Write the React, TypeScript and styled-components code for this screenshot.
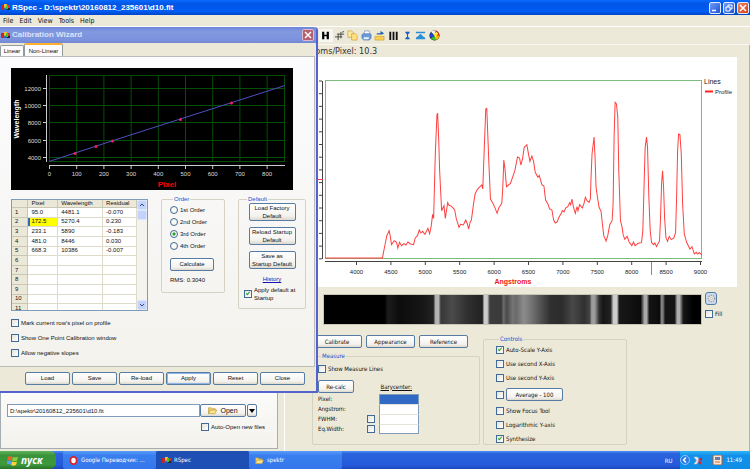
import React from "react";
import styled, { createGlobalStyle, css } from "styled-components";

const sans = `"Liberation Sans", Arial, sans-serif`;
const tahoma = `"DejaVu Sans Condensed", "DejaVu Sans", Tahoma, sans-serif`;

const GlobalStyle = createGlobalStyle`
  *, *::before, *::after { box-sizing: border-box; }
  body { margin: 0; background: #ece9d8; color: #111; font: 6px/8px ${tahoma}; }
  button, input, legend, label, table { font: inherit; color: inherit; }
  svg { display: block; }
`;

/* ---------- shared controls ---------- */

const Button = styled.button<{ $active?: boolean; $width?: number; $tall?: boolean }>`
  height: ${(p) => (p.$tall ? 18 : 13)}px;
  width: ${(p) => (p.$width ? `${p.$width}px` : "auto")};
  padding: 0;
  border: 1px solid #567ba4;
  border-radius: 2px;
  background: linear-gradient(#ffffff, #f3f2ee 75%, #dcd8cc);
  box-shadow: ${(p) => (p.$active ? "inset 0 0 0 1px #8fb4ec" : "none")};
  text-align: center;
  line-height: ${(p) => (p.$tall ? 8 : 11)}px;
`;

const Tick = styled.input`
  appearance: none;
  flex: none;
  position: relative;
  width: 8px;
  height: 8px;
  margin: 0;
  border: 1px solid #3f6b96;
  background: linear-gradient(135deg, #e4e3dc, #ffffff);
  &:checked::after {
    content: "";
    position: absolute;
    left: 2px;
    top: 0;
    width: 2px;
    height: 4px;
    border: solid #21a121;
    border-width: 0 1px 1px 0;
    transform: rotate(40deg);
  }
`;

const Radio = styled.input`
  appearance: none;
  flex: none;
  width: 8px;
  height: 8px;
  margin: 0;
  border: 1px solid #3f6b96;
  border-radius: 50%;
  background: #f8f8f5;
  &:checked {
    background: radial-gradient(circle, #21a121 0 1px, #f8f8f5 2px);
  }
`;

const Label = styled.label`
  display: flex;
  align-items: center;
  gap: 2px;
  white-space: nowrap;
`;

const Group = styled.fieldset`
  min-width: 0;
  margin: 0;
  padding: 0;
  border: 1px solid #d5d2c2;
  border-radius: 2px;
`;

const Legend = styled.legend`
  margin-left: 3px;
  padding: 0 1px;
  line-height: 8px;
  color: #1a4fd6;
`;

function Check({ text, on }: { text: string; on?: boolean }) {
  return (
    <Label>
      <Tick type="checkbox" defaultChecked={on} />
      {text}
    </Label>
  );
}

/* ---------- window chrome ---------- */

const Page = styled.div`
  display: flex;
  flex-direction: column;
  min-height: 100vh;
`;

const TitleBar = styled.header`
  display: flex;
  align-items: center;
  gap: 2px;
  height: 15px;
  padding: 0 1px;
  background: linear-gradient(#0a6bff, #0055e5 25%, #005cf5 75%, #0045c4);
`;

const Title = styled.h1`
  flex: 1;
  margin: 0;
  color: #fff;
  font: bold 8px/14px ${sans};
  white-space: nowrap;
`;

const CaptionButton = styled.button<{ $close?: boolean }>`
  width: 12px;
  height: 12px;
  padding: 1px;
  border: 1px solid #dfe9ff;
  border-radius: 2px;
  background: ${(p) =>
    p.$close
      ? "linear-gradient(135deg, #f08a68, #d83a12)"
      : "linear-gradient(135deg, #6d9cf8, #1f52d6)"};
`;

const MenuBar = styled.nav`
  display: flex;
  gap: 6px;
  height: 11px;
  padding: 0 3px;
  font-size: 7px;
  line-height: 10px;
`;

const MenuItem = styled.button`
  padding: 0;
  border: 0;
  background: none;
`;

const Workspace = styled.main`
  position: relative;
  flex: 1;
  display: flex;
  flex-direction: column;
`;

const ToolBar = styled.div`
  display: grid;
  grid-template-columns: repeat(9, 1fr);
  align-items: center;
  width: 122px;
  height: 17px;
  margin-left: 319px;
`;

const ToolStrip = styled.div`
  border-top: 1px solid #fff;
  border-bottom: 1px solid #f8f7f0;
`;

const ToolButton = styled.button<{ $on?: boolean }>`
  display: grid;
  place-items: center;
  height: 13px;
  padding: 0;
  border: 0;
  background: ${(p) => (p.$on ? "#f7f6f0" : "none")};
`;

function AppIcon() {
  return (
    <svg width="9" height="7" viewBox="0 0 9 7">
      <rect y="1" width="9" height="5" fill="#223" />
      <rect x="0" y="1" width="3" height="5" fill="#c22" />
      <rect x="3" y="0" width="3" height="5" fill="#fb3" />
      <rect x="5" y="1" width="2" height="4" fill="#3c3" />
      <rect x="7" y="1" width="2" height="3" fill="#d33" />
      <path d="M2 6l2-3 2 3z" fill="#26c" />
    </svg>
  );
}

function Folder({ size = 9 }: { size?: number }) {
  return (
    <svg width={size} height={size} viewBox="0 0 10 10">
      <path d="M.5 8.500V2h3l1 1H8v1.500" fill="#f4d264" stroke="#a8842a" strokeWidth=".6" />
      <path d="M.5 8.500L2.500 4.500H9.700L7.800 8.500z" fill="#ffe58a" stroke="#a8842a" strokeWidth=".6" />
    </svg>
  );
}

const toolIcons: { name: string; art: React.ReactNode }[] = [
  { name: "Profile", art: <path d="M3 2v8M4 2v8M8 2v8M9 2v8M4 6h4" stroke="#000" strokeWidth="1.400" fill="none" /> },
  { name: "Crop", art: <path d="M4.500 4v7M1 7.500h8M7.500 2v7M3.500 4.500H11M9 2.500l2-1" stroke="#333" strokeWidth=".9" fill="none" /> },
  {
    name: "Copy",
    art: (
      <>
        <path d="M1 1h4l2 2v5H1z" fill="#ffe9a0" stroke="#c79a3a" strokeWidth=".7" />
        <path d="M5 4h4l2 2v5H5z" fill="#ffe080" stroke="#c79a3a" strokeWidth=".7" />
      </>
    ),
  },
  {
    name: "Print",
    art: (
      <>
        <path d="M4 1h5l1 4H3z" fill="#fff" stroke="#5c86c0" strokeWidth=".7" />
        <path d="M1 5l2-1h7l1 1v4l-2 2H3L1 9z" fill="#6a9ad8" stroke="#3b68a8" strokeWidth=".6" />
        <path d="M3 8h6l-1 2H3z" fill="#eef4fc" />
      </>
    ),
  },
  {
    name: "Open",
    art: (
      <>
        <path d="M1 7h10v4H1z" fill="#f7cf55" stroke="#c7982a" strokeWidth=".6" />
        <path d="M2 5h9v1.500H2z" fill="#ffe48c" />
        <path d="M3 3.500h4V1l4 2.500L9 5H3z" fill="#2463b8" />
      </>
    ),
  },
  { name: "Lines", art: <path d="M2.500 2v9M6 2v9M9.500 2v9" stroke="#111" strokeWidth="2" /> },
  { name: "Height", art: <path d="M3.500 2.500h5M3.500 9.500h5M6 2.500v7M4.500 4L6 2.500 7.500 4M4.500 8L6 9.500 7.500 8" stroke="#1c62b8" strokeWidth="1.200" fill="none" /> },
  { name: "Peak", art: <path d="M1 2h10v1.500H1zM6 4l4 4h1v2H1V8h1z" fill="#2b8fd8" /> },
  {
    name: "Colors",
    art: (
      <>
        <circle cx="6" cy="6" r="5.500" fill="#111" />
        <path d="M6 6L2 2A5.500 5.500 0 0 1 8 1z" fill="#eee" />
        <path d="M6 6L7 1a5 5 0 0 1 4 5z" fill="#f22" />
        <path d="M6 6h5a5 5 0 0 1-4 5z" fill="#fb1" />
        <path d="M6 6l1 5a5 5 0 0 1-5-2z" fill="#3b3" />
        <path d="M6 6L2 9a5 5 0 0 1 0-6z" fill="#24d" />
        <path d="M5 5l3-3 2 2-3 4z" fill="#fe3" />
      </>
    ),
  },
];

/* ---------- main columns ---------- */

const Columns = styled.div`
  flex: 1;
  display: grid;
  grid-template-columns: 278px minmax(0, 1fr);
  column-gap: 6px;
`;

const FilePanel = styled.section`
  display: flex;
  flex-direction: column;
  justify-content: flex-end;
  gap: 6px;
  margin-bottom: 2px;
  padding: 0 20px 17px 6px;
  border: solid #a5acb2;
  border-width: 0 1px 1px 1px;
  background: linear-gradient(#fff 80%, #f3f2ed);
  font-family: ${sans};
`;

const FileRow = styled.div`
  display: flex;
  height: 13px;
`;

const PathInput = styled.input`
  flex: 1;
  min-width: 0;
  padding: 0 2px;
  border: 1px solid #7f9db9;
  background: #fff;
`;

const OpenButton = styled(Button)`
  display: flex;
  align-items: center;
  justify-content: center;
  gap: 3px;
  margin-right: 1px;
  font-size: 7px;
`;

const AutoOpen = styled.div`
  display: flex;
  justify-content: flex-end;
  margin-right: -8px;
`;

const Analysis = styled.section`
  display: flex;
  flex-direction: column;
  padding-right: 12px;
  border-left: 1px solid #fff;
  border-right: 1px solid #b5b2a4;
`;

const Scale = styled.div`
  height: 12px;
  padding-left: 4px;
  font-size: 9px;
  line-height: 13px;
  color: #333;
`;

const ChartBox = styled.div`
  background: #fff;
  > svg {
    width: 100%;
    height: auto;
  }
`;

const StripRow = styled.div`
  display: grid;
  grid-template-columns: minmax(0, 1fr) 32px;
  column-gap: 3px;
  margin-top: 5px;
  padding-left: 38px;
`;

const Strip = styled.div`
  height: 31px;
  margin-top: 2px;
  border: 1px solid #c9c6b6;
  background: linear-gradient(
    90deg,
    #000 0 16%, #1c1c1c 17%, #0c0c0c 20%, #161616 26%, #222 29%,
    #b4b4b4 29.600% 30.400%, #383838 31%, #4a4a4a 34%, #303030 38%, #222 42%,
    #ccc 42.500% 43.300%, #3c3c3c 44%, #3a3a3a 47%, #6a6a6a 47.600%, #4a4a4a 48.500%,
    #747474 50%, #6a6a6a 51%, #8c8c8c 53%, #747474 55%, #585858 57%, #303030 60%,
    #2c2c2c 63%, #484848 66%, #303030 69%, #444 70.500%,
    #9c9c9c 71% 71.800%, #303030 73%, #161616 74%, #222 76%,
    #ccc 76.800% 77.700%, #181818 78.300%, #0c0c0c 84%,
    #aaa 85% 85.600%, #141414 86.300%, #0c0c0c 89%, #808080 89.500% 89.900%,
    #141414 90.500%, #161616 93%, #b0b0b0 93.700% 94.300%, #161616 95.300%, #000 98%
  );
`;

const StripTools = styled.div`
  display: flex;
  flex-direction: column;
  gap: 5px;
`;

const GearButton = styled(Button)`
  display: grid;
  place-items: center;
  border-radius: 3px;
  background: #c9daf0;
`;

const LowerArea = styled.div`
  display: grid;
  grid-template-columns: 168px 144px;
  column-gap: 3px;
  padding-left: 27px;
  margin-top: 10px;
`;

const ButtonRow = styled.div`
  display: flex;
  gap: 4px;
`;

const Measure = styled(Group)`
  margin-top: 4px;
  height: 93px;
  padding: 5px 4px 0 5px;
`;

const MeasureTools = styled.div`
  display: flex;
  justify-content: space-between;
  align-items: center;
  margin: 7px 63px 1px 0;
`;

const MeasureGrid = styled.div`
  display: grid;
  grid-template-columns: 49px 12px 40px;
  grid-auto-rows: 10px;
  align-items: center;
`;

const MeasureValue = styled.output<{ $first?: boolean; $last?: boolean }>`
  height: 10px;
  border: 1px solid #7f9db9;
  border-top-color: ${(p) => (p.$first ? "#7f9db9" : "#e6e3d8")};
  border-bottom: ${(p) => (p.$last ? "1px solid #7f9db9" : "0")};
  background: ${(p) => (p.$first ? "#316ac5" : "#fff")};
`;

const Controls = styled(Group)`
  height: 110px;
  padding: 3px 12px 1px;
`;

const ControlList = styled.div`
  display: flex;
  flex-direction: column;
  justify-content: space-between;
  height: 97px;
`;

const Underlined = styled.span`
  text-decoration: underline;
`;

/* ---------- calibration dialog ---------- */

const Dialog = styled.section`
  position: absolute;
  left: 0;
  top: 1px;
  width: 318px;
  border: solid #5563d0;
  border-width: 0 2px 2px 0;
  border-radius: 0 4px 0 0;
  background: #ece9d8;
  font-family: ${sans};
`;

const DialogTitle = styled(TitleBar)`
  height: 16px;
  border-radius: 0 3px 0 0;
  background: linear-gradient(#6f85d8, #8299e0 30%, #7b92dd 80%, #7388d4);
`;

const DialogName = styled(Title)`
  color: #d9e2f8;
`;

const DialogClose = styled(CaptionButton)`
  border-color: #dcb9cc;
  background: #b4606f;
  margin-right: 1px;
`;

const Tabs = styled.div`
  display: flex;
  align-items: end;
  height: 13px;
`;

const Tab = styled.button<{ $on?: boolean }>`
  height: ${(p) => (p.$on ? 13 : 11)}px;
  width: ${(p) => (p.$on ? 39 : 24)}px;
  padding: 0;
  border: 1px solid #919b9c;
  border-bottom: 0;
  border-radius: 2px 2px 0 0;
  background: #fcfcfe;
  ${(p) => p.$on && css`border-top: 2px solid #ffb02e;`}
`;

const TabPage = styled.div`
  margin-right: 1px;
  padding: 11px 8px 9px 11px;
  border: solid #b9bcb8;
  border-width: 1px 1px 1px 0;
  background: linear-gradient(#fcfcfe, #f3f2ed);
`;

const FitRow = styled.div`
  display: grid;
  grid-template-columns: 137px 64px 68px;
  justify-content: space-between;
  align-items: start;
  margin-top: 5px;
`;

const GridFrame = styled.div`
  display: flex;
  height: 112px;
  margin-top: 4px;
  overflow: hidden;
  border: 1px solid #7f9db9;
  background: #fff;
`;

const DataTable = styled.table`
  flex: 1;
  height: 114px;
  border-collapse: collapse;
  table-layout: fixed;
  line-height: 7px;
  th, td {
    padding: 0 0 0 3px;
    border: solid #dedbc9;
    border-width: 0 1px 1px 0;
    font-weight: normal;
    text-align: left;
  }
  th { background: #ebe8d8; border-color: #c9c6b6; }
`;

const Col = styled.col<{ $w: number }>`
  width: ${(p) => p.$w}px;
`;

const Cell = styled.td<{ $picked?: boolean }>`
  ${(p) => p.$picked && css`
    background: #ffff00;
    box-shadow: inset 2px 0 0 #316ac5;
  `}
`;

const ScrollBar = styled.div`
  display: flex;
  flex-direction: column;
  width: 10px;
  background: #f4f3ee;
`;

const ScrollArrow = styled.button`
  display: grid;
  place-items: center;
  height: 10px;
  padding: 0;
  border: 1px solid #dbe5fb;
  border-radius: 2px;
  background: #c3d3fd;
`;

const Thumb = styled(ScrollArrow)`
  margin-bottom: auto;
`;

const Order = styled(Group)`
  height: 98px;
  padding: 3px 0 0 8px;
`;

const OrderList = styled.div`
  display: grid;
  gap: 4px;
  margin-bottom: 8px;
`;

const Rms = styled.p`
  margin: 5px 0 0;
`;

const Defaults = styled(Group)`
  height: 114px;
  padding: 0 5px;
`;

const DefaultStack = styled.div`
  display: grid;
  justify-items: center;
  gap: 6px;
  button { width: 47px; }
`;

const History = styled.a`
  color: #1414b4;
  line-height: 8px;
`;

const WrapLabel = styled(Label)`
  margin-top: 3px;
`;

const Options = styled.div`
  display: grid;
  gap: 7px;
  margin-top: 8px;
`;

const Footer = styled.footer`
  display: flex;
  justify-content: flex-end;
  gap: 2px;
  padding: 5px 11px 6px;
`;

/* ---------- task bar ---------- */

const TaskBar = styled.footer`
  display: flex;
  height: 18px;
  background: linear-gradient(#4a92f5, #2b63dc 15%, #245adb 80%, #1c48b8);
  color: #fff;
`;

const Start = styled.button`
  display: flex;
  align-items: center;
  gap: 3px;
  width: 56px;
  margin-right: 7px;
  padding: 0 0 0 7px;
  border: 0;
  border-radius: 0 6px 6px 0;
  background: linear-gradient(#5fb55f, #3a933a 25%, #3c9a3c 75%, #2a722a);
  color: #fff;
  font: italic bold 10px/16px "Open Sans", "Noto Sans", sans-serif;
`;

const Task = styled.button<{ $on?: boolean }>`
  display: flex;
  align-items: center;
  gap: 3px;
  width: 93px;
  padding: 0 6px;
  border: 0;
  border-radius: 2px;
  background: ${(p) => (p.$on ? "#1e4fb4" : "linear-gradient(#5a9cfa, #3a7ff0 25%, #3577ea)")};
  color: #fff;
  white-space: nowrap;
`;

const Tray = styled.div`
  display: flex;
  align-items: center;
  gap: 3px;
  margin-left: 8px;
  padding-right: 8px;
  background: linear-gradient(#2fb4f5, #1391ea 25%, #0f8ee8);
`;

const Language = styled.span`
  margin-left: auto;
  line-height: 19px;
`;

const spectrum =
  "48,562 220,562 223,545 228,520 233,495 240,480 243,495 247,522 255,510 262,515 266,532 271,515 277,525 284,519 290,523 296,514 304,520 313,522 318,502 325,495 330,478 335,487 340,482 347,491 356,473 361,489 366,465 370,431 373,443 378,250 383,132 385,128 388,200 391,300 397,420 404,405 408,443 415,396 419,404 427,407 436,418 441,445 449,470 454,461 462,463 469,448 474,460 478,475 482,455 486,448 491,410 497,370 504,356 517,343 520,355 525,220 529,115 532,113 535,190 538,270 543,385 550,397 556,410 563,428 568,412 577,398 580,350 583,268 587,300 591,348 603,338 616,300 624,259 630,262 634,283 639,265 644,230 652,222 656,245 661,272 667,256 672,272 677,305 685,320 689,314 697,342 703,346 708,388 715,400 720,415 727,418 732,448 737,457 743,453 748,440 755,428 758,420 763,424 768,412 775,407 780,396 783,402 787,385 791,408 797,428 802,408 805,420 810,402 818,412 823,398 827,380 832,390 838,395 842,385 844,320 847,250 853,199 856,260 859,350 864,385 868,410 874,422 878,460 882,495 889,511 894,495 900,462 907,450 910,400 913,200 916,95 920,100 924,140 927,300 932,450 937,470 940,492 945,506 952,497 958,514 966,525 971,514 976,525 985,518 995,516 999,480 1003,330 1006,230 1010,199 1013,230 1017,380 1021,480 1025,515 1031,522 1035,517 1040,528 1049,510 1052,440 1055,340 1058,300 1061,350 1064,440 1068,500 1073,512 1078,497 1084,507 1092,502 1097,485 1100,380 1103,240 1106,190 1110,192 1114,250 1118,400 1123,490 1130,515 1140,535 1146,528 1153,550 1159,545 1163,550 1168,546 1176,553";

function SpectrumChart() {
  const wavelengths = Array.from({ length: 11 }, (_, i) => 4000 + i * 500);
  return (
    <svg viewBox="0 0 452 230" fontFamily={sans} fontSize="6" fill="#222">
      <path d="M37.500 24V202" stroke="#444" />
      {Array.from({ length: 15 }, (_, i) => (
        <path key={i} d={`M34 ${24 + i * 12.7}h3`} stroke="#444" />
      ))}
      <path d="M33 122.500h5" stroke="#f33" />
      <rect x="40.500" y="23.500" width="376" height="178" fill="#fff" stroke="#7dbb7d" />
      <svg x="40" y="23" width="377" height="179" viewBox="48 28 1128 537" preserveAspectRatio="none">
        <polyline points={spectrum} fill="none" stroke="#ff4040" strokeWidth="3" />
      </svg>
      <path d="M40 204.500H417" stroke="#444" />
      {wavelengths.map((w, i) => (
        <g key={w}>
          <path d={`M${71.5 + i * 34.4} 205v3`} stroke="#444" />
          <text x={71.5 + i * 34.4} y="217" textAnchor="middle">{w}</text>
        </g>
      ))}
      <path d="M366.500 205v13" stroke="#f55" />
      <text x="228" y="227" textAnchor="middle" fill="#f01818" fontWeight="bold" fontSize="7">Angstroms</text>
      <text x="419" y="27" fontSize="7">Lines</text>
      <path d="M420 34.500h8" stroke="#f22" strokeWidth="2" />
      <text x="430" y="37">Profile</text>
    </svg>
  );
}

function CalibrationChart() {
  const points = [[64, 85.5], [85, 78.5], [101.5, 73], [169.5, 51.5], [220.5, 35]];
  return (
    <svg width="282" height="122" viewBox="0 0 282 122" fontFamily={sans} fontSize="6" fill="#ddd">
      <rect width="282" height="122" fill="#000" />
      <rect x="38.500" y="7.500" width="235" height="86" fill="none" stroke="#064d06" />
      {[20.5, 37.5, 54.5, 72.5, 89.5].map((y, i) => (
        <g key={y}>
          <path d={`M39 ${y}h235`} stroke="#064d06" />
          <path d={`M32 ${y}h3`} stroke="#ccc" />
          <text x="30" y={y + 2} textAnchor="end">{12000 - i * 2000}</text>
        </g>
      ))}
      {Array.from({ length: 9 }, (_, i) => (
        <g key={i}>
          {i > 0 && <path d={`M${38.5 + i * 27.2} 7v87`} stroke="#064d06" />}
          <path d={`M${38.5 + i * 27.2} 97v4`} stroke="#ccc" />
          <text x={38.5 + i * 27.2} y="108" textAnchor="middle">{i * 100}</text>
        </g>
      ))}
      <path d="M35.500 7v87M38 97.500h236" stroke="#ccc" />
      <path d="M38 93.500L110 70l164-52.500" stroke="#4f4fc4" fill="none" />
      {points.map(([x, y]) => (
        <circle key={x} cx={x} cy={y} r="1.500" fill="#f0205a" />
      ))}
      <text x="156" y="119" textAnchor="middle" fill="#f00" fontWeight="bold" fontSize="8">Pixel</text>
      <text transform="translate(8 51) rotate(-90)" textAnchor="middle" fill="#fff" fontWeight="bold" fontSize="7">Wavelength</text>
    </svg>
  );
}

const fitRows = [
  ["95.0", "4481.1", "-0.070"],
  ["172.5", "5270.4", "0.230"],
  ["233.1", "5890", "-0.183"],
  ["481.0", "8446", "0.030"],
  ["668.3", "10386", "-0.007"],
];

function CalibrationDialog() {
  return (
    <Dialog role="dialog" aria-label="Calibration Wizard">
      <DialogTitle>
        <AppIcon />
        <DialogName as="h2">Calibration Wizard</DialogName>
        <DialogClose aria-label="Close">
          <svg viewBox="0 0 8 8"><path d="M1 1l6 6M7 1L1 7" stroke="#fff" strokeWidth="1.500" /></svg>
        </DialogClose>
      </DialogTitle>
      <Tabs>
        <Tab>Linear</Tab>
        <Tab $on>Non-Linear</Tab>
      </Tabs>
      <TabPage>
        <CalibrationChart />
        <FitRow>
          <GridFrame>
            <DataTable>
              <colgroup><Col $w={16} /><Col $w={30} /><Col $w={45} /><Col $w={34} /></colgroup>
              <thead>
                <tr><th /><th>Pixel</th><th>Wavelength</th><th>Residual</th></tr>
              </thead>
              <tbody>
                {Array.from({ length: 11 }, (_, r) => (
                  <tr key={r}>
                    <th>{r + 1}</th>
                    {[0, 1, 2].map((c) => (
                      <Cell key={c} $picked={r === 1 && c === 0}>{fitRows[r]?.[c]}</Cell>
                    ))}
                  </tr>
                ))}
              </tbody>
            </DataTable>
            <ScrollBar>
              <ScrollArrow aria-label="Up">
                <svg width="6" height="4" viewBox="0 0 6 4"><path d="M1 3l2-2 2 2" stroke="#334a80" fill="none" /></svg>
              </ScrollArrow>
              <Thumb aria-label="Scroll" />
              <ScrollArrow aria-label="Down">
                <svg width="6" height="4" viewBox="0 0 6 4"><path d="M1 1l2 2 2-2" stroke="#334a80" fill="none" /></svg>
              </ScrollArrow>
            </ScrollBar>
          </GridFrame>
          <Order>
            <Legend>Order</Legend>
            <OrderList>
              {["1st", "2nd", "3rd", "4th"].map((n) => (
                <Label key={n}><Radio type="radio" name="order" defaultChecked={n === "3rd"} />{n} Order</Label>
              ))}
            </OrderList>
            <Button $width={44}>Calculate</Button>
            <Rms>RMS: 0.3040</Rms>
          </Order>
          <Defaults>
            <Legend>Default</Legend>
            <DefaultStack>
              <Button $tall>Load Factory<br />Default</Button>
              <Button $tall>Reload Startup<br />Default</Button>
              <Button $tall>Save as<br />Startup Default</Button>
              <History href="#history">History</History>
            </DefaultStack>
            <WrapLabel>
              <Tick type="checkbox" defaultChecked />
              <span>Apply default at<br />Startup</span>
            </WrapLabel>
          </Defaults>
        </FitRow>
        <Options>
          <Check text="Mark current row's pixel on profile" />
          <Check text="Show One Point Calibration window" />
          <Check text="Allow negative slopes" />
        </Options>
      </TabPage>
      <Footer>
        {["Load", "Save", "Re-load", "Apply", "Reset", "Close"].map((t) => (
          <Button key={t} $width={45} $active={t === "Apply"}>{t}</Button>
        ))}
      </Footer>
    </Dialog>
  );
}

export default function App() {
  return (
    <Page>
      <GlobalStyle />
      <TitleBar>
        <AppIcon />
        <Title>RSpec - D:\spektr\20160812_235601\d10.fit</Title>
        <CaptionButton aria-label="Minimize">
          <svg viewBox="0 0 8 8"><path d="M1 6.500h4" stroke="#fff" strokeWidth="1.500" /></svg>
        </CaptionButton>
        <CaptionButton aria-label="Restore">
          <svg viewBox="0 0 8 8"><path d="M3 3V1h4v4H5M1 3h4v4H1z" stroke="#fff" fill="none" /></svg>
        </CaptionButton>
        <CaptionButton $close aria-label="Close">
          <svg viewBox="0 0 8 8"><path d="M1 1l6 6M7 1L1 7" stroke="#fff" strokeWidth="1.500" /></svg>
        </CaptionButton>
      </TitleBar>
      <MenuBar>
        {["File", "Edit", "View", "Tools", "Help"].map((m) => <MenuItem key={m}>{m}</MenuItem>)}
      </MenuBar>
      <Workspace>
        <ToolStrip>
          <ToolBar>
            {toolIcons.map((t, i) => (
              <ToolButton key={t.name} aria-label={t.name} $on={i === 0}>
                <svg width="11" height="11" viewBox="0 0 12 12">{t.art}</svg>
              </ToolButton>
            ))}
          </ToolBar>
        </ToolStrip>
        <Columns>
          <FilePanel>
            <FileRow>
              <PathInput aria-label="File" defaultValue="D:\spektr\20160812_235601\d10.fit" />
              <OpenButton $width={46}><Folder />Open</OpenButton>
              <Button $width={10} aria-label="Recent files">
                <svg width="8" height="5" viewBox="0 0 8 5"><path d="M1 1h6L4 5z" fill="#000" /></svg>
              </Button>
            </FileRow>
            <AutoOpen><Check text="Auto-Open new files" /></AutoOpen>
          </FilePanel>
          <Analysis>
            <Scale>Angstroms/Pixel: 10.3</Scale>
            <ChartBox><SpectrumChart /></ChartBox>
            <StripRow>
              <Strip />
              <StripTools>
                <GearButton $width={12} aria-label="Strip settings">
                  <svg width="9" height="9" viewBox="0 0 10 10">
                    <circle cx="5" cy="5" r="3.500" fill="#eee" stroke="#999" strokeDasharray="1.500 1" strokeWidth="1.500" />
                    <circle cx="5" cy="5" r="1.200" fill="#fff" stroke="#999" strokeWidth=".7" />
                  </svg>
                </GearButton>
                <Check text="Fill" />
              </StripTools>
            </StripRow>
            <LowerArea>
              <div>
                <ButtonRow>
                  <Button $width={50}>Calibrate</Button>
                  <Button $width={49}>Appearance</Button>
                  <Button $width={49}>Reference</Button>
                </ButtonRow>
                <Measure>
                  <Legend>Measure</Legend>
                  <Check text="Show Measure Lines" />
                  <MeasureTools>
                    <Button $width={36}>Re-calc</Button>
                    <Underlined>Barycenter:</Underlined>
                  </MeasureTools>
                  <MeasureGrid>
                    {["Pixel:", "Angstrom:", "FWHM:", "Eq.Width:"].map((t, i) => (
                      <React.Fragment key={t}>
                        <span>{t}</span>
                        {i > 1 ? <Tick type="checkbox" aria-label={t} /> : <span />}
                        <MeasureValue $first={i === 0} $last={i === 3} />
                      </React.Fragment>
                    ))}
                  </MeasureGrid>
                </Measure>
              </div>
              <Controls>
                <Legend>Controls</Legend>
                <ControlList>
                  <Check text="Auto-Scale Y-Axis" on />
                  <Check text="Use second X-Axis" />
                  <Check text="Use second Y-Axis" />
                  <Label as="div">
                    <Tick type="checkbox" aria-label="Average" />
                    <Button $width={57}>Average - 100</Button>
                  </Label>
                  <Check text="Show Focus Tool" />
                  <Check text="Logarithmic Y-axis" />
                  <Check text="Synthesize" on />
                </ControlList>
              </Controls>
            </LowerArea>
          </Analysis>
        </Columns>
        <CalibrationDialog />
      </Workspace>
      <TaskBar>
        <Start>
          <svg width="11" height="11" viewBox="0 0 12 12">
            <path d="M1 2q2-1.500 5 0L5 6Q3 4.500 0 6z" fill="#f2602a" />
            <path d="M6.500 2.300Q9 3.500 12 2l-1 4q-3 1.500-5.500.2z" fill="#8ccf3c" />
            <path d="M0 6.700q3-1.300 5 0l-1 4Q2 9.300-1 10.500z" fill="#5b9bf5" />
            <path d="M5.400 7q3 1.300 5.500 0l-1 4q-3 1.300-5.500 0z" fill="#fcd034" />
          </svg>
          пуск
        </Start>
        <Task>
          <svg width="9" height="9" viewBox="0 0 10 10"><ellipse cx="5" cy="5" rx="3.500" ry="4" fill="#fff" stroke="#e0202a" strokeWidth="2" /></svg>
          Google Переводчик: ...
        </Task>
        <Task $on><AppIcon />RSpec</Task>
        <Task><Folder />spektr</Task>
        <Language>RU</Language>
        <Tray>
          <svg width="10" height="10" viewBox="0 0 10 10">
            <circle cx="5" cy="5" r="4.500" fill="#2a7ae8" stroke="#bfe0ff" strokeWidth=".7" />
            <path d="M6 2.500L3.500 5 6 7.500" stroke="#fff" strokeWidth="1.500" fill="none" />
          </svg>
          <svg width="9" height="9" viewBox="0 0 10 10">
            <path d="M1 1l3 4-3 4h3l3-4-2-4z" fill="#e8e8ee" stroke="#b8bccb" strokeWidth=".5" />
            <path d="M5 5l5-4v4zM5 6l4 4V6z" fill="#d8202a" />
          </svg>
          <svg width="18" height="10" viewBox="0 0 18 10">
            <rect x="8" width="9" height="10" rx="1" fill="#f5e6d8" stroke="#b05a28" />
            <path d="M10 2h5v3h-5z" fill="#6b7ba8" />
            <path d="M10 7h5" stroke="#e07020" />
          </svg>
          <span>11:49</span>
        </Tray>
      </TaskBar>
    </Page>
  );
}
